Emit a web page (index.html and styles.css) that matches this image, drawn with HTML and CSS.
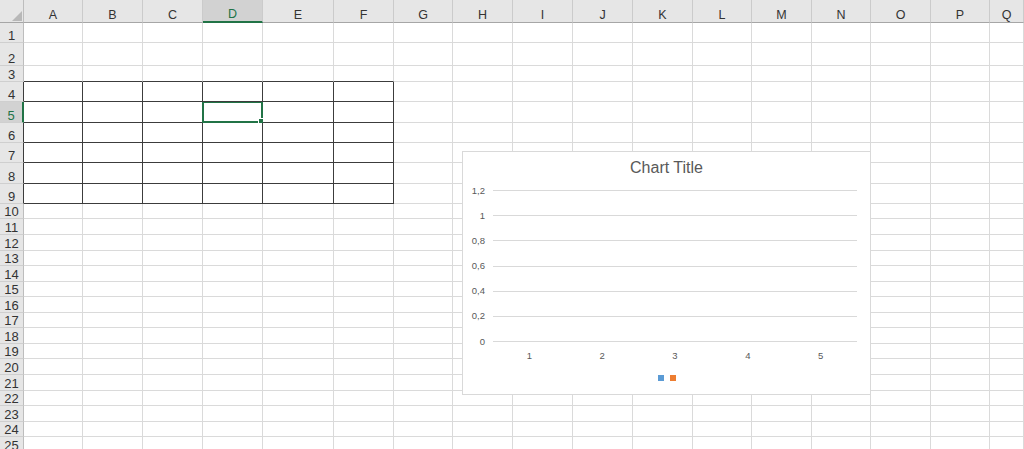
FILE: index.html
```html
<!DOCTYPE html>
<html>
<head>
<meta charset="utf-8">
<title>Sheet</title>
<link rel="stylesheet" href="styles.css">
</head>
<body>
<div class="sheet">
  <div class="row hdr"><span class="corner"><svg width="10" height="10" viewBox="0 0 10 10"><polygon points="10,0 10,10 0,10" fill="#b8b8b8"/></svg></span><span>A</span><span>B</span><span>C</span><span class="on">D</span><span>E</span><span>F</span><span>G</span><span>H</span><span>I</span><span>J</span><span>K</span><span>L</span><span>M</span><span>N</span><span>O</span><span>P</span><span>Q</span></div>
  <div class="row h20"><span class="rh">1</span><span></span><span></span><span></span><span></span><span></span><span></span><span></span><span></span><span></span><span></span><span></span><span></span><span></span><span></span><span></span><span></span><span></span></div>
  <div class="row h23"><span class="rh">2</span><span></span><span></span><span></span><span></span><span></span><span></span><span></span><span></span><span></span><span></span><span></span><span></span><span></span><span></span><span></span><span></span><span></span></div>
  <div class="row h16 tt"><span class="rh">3</span><span></span><span></span><span></span><span></span><span></span><span></span><span></span><span></span><span></span><span></span><span></span><span></span><span></span><span></span><span></span><span></span><span></span></div>
  <div class="row h20 tb"><span class="rh">4</span><span></span><span></span><span></span><span></span><span></span><span></span><span></span><span></span><span></span><span></span><span></span><span></span><span></span><span></span><span></span><span></span><span></span></div>
  <div class="row h21 tb"><span class="rh on">5</span><span></span><span></span><span></span><span class="cur"><i class="selbox"></i></span><span></span><span></span><span></span><span></span><span></span><span></span><span></span><span></span><span></span><span></span><span></span><span></span><span></span></div>
  <div class="row h20 tb"><span class="rh">6</span><span></span><span></span><span></span><span></span><span></span><span></span><span></span><span></span><span></span><span></span><span></span><span></span><span></span><span></span><span></span><span></span><span></span></div>
  <div class="row h20 tb"><span class="rh">7</span><span></span><span></span><span></span><span></span><span></span><span></span><span></span><span></span><span></span><span></span><span></span><span></span><span></span><span></span><span></span><span></span><span></span></div>
  <div class="row h21 tb"><span class="rh">8</span><span></span><span></span><span></span><span></span><span></span><span></span><span></span><span></span><span></span><span></span><span></span><span></span><span></span><span></span><span></span><span></span><span></span></div>
  <div class="row h20 tb"><span class="rh">9</span><span></span><span></span><span></span><span></span><span></span><span></span><span></span><span></span><span></span><span></span><span></span><span></span><span></span><span></span><span></span><span></span><span></span></div>
  <div class="row h15"><span class="rh">10</span><span></span><span></span><span></span><span></span><span></span><span></span><span></span><span></span><span></span><span></span><span></span><span></span><span></span><span></span><span></span><span></span><span></span></div>
  <div class="row h16"><span class="rh">11</span><span></span><span></span><span></span><span></span><span></span><span></span><span></span><span></span><span></span><span></span><span></span><span></span><span></span><span></span><span></span><span></span><span></span></div>
  <div class="row h16"><span class="rh">12</span><span></span><span></span><span></span><span></span><span></span><span></span><span></span><span></span><span></span><span></span><span></span><span></span><span></span><span></span><span></span><span></span><span></span></div>
  <div class="row h15"><span class="rh">13</span><span></span><span></span><span></span><span></span><span></span><span></span><span></span><span></span><span></span><span></span><span></span><span></span><span></span><span></span><span></span><span></span><span></span></div>
  <div class="row h16"><span class="rh">14</span><span></span><span></span><span></span><span></span><span></span><span></span><span></span><span></span><span></span><span></span><span></span><span></span><span></span><span></span><span></span><span></span><span></span></div>
  <div class="row h15"><span class="rh">15</span><span></span><span></span><span></span><span></span><span></span><span></span><span></span><span></span><span></span><span></span><span></span><span></span><span></span><span></span><span></span><span></span><span></span></div>
  <div class="row h16"><span class="rh">16</span><span></span><span></span><span></span><span></span><span></span><span></span><span></span><span></span><span></span><span></span><span></span><span></span><span></span><span></span><span></span><span></span><span></span></div>
  <div class="row h15"><span class="rh">17</span><span></span><span></span><span></span><span></span><span></span><span></span><span></span><span></span><span></span><span></span><span></span><span></span><span></span><span></span><span></span><span></span><span></span></div>
  <div class="row h16"><span class="rh">18</span><span></span><span></span><span></span><span></span><span></span><span></span><span></span><span></span><span></span><span></span><span></span><span></span><span></span><span></span><span></span><span></span><span></span></div>
  <div class="row h15"><span class="rh">19</span><span></span><span></span><span></span><span></span><span></span><span></span><span></span><span></span><span></span><span></span><span></span><span></span><span></span><span></span><span></span><span></span><span></span></div>
  <div class="row h16"><span class="rh">20</span><span></span><span></span><span></span><span></span><span></span><span></span><span></span><span></span><span></span><span></span><span></span><span></span><span></span><span></span><span></span><span></span><span></span></div>
  <div class="row h16"><span class="rh">21</span><span></span><span></span><span></span><span></span><span></span><span></span><span></span><span></span><span></span><span></span><span></span><span></span><span></span><span></span><span></span><span></span><span></span></div>
  <div class="row h15"><span class="rh">22</span><span></span><span></span><span></span><span></span><span></span><span></span><span></span><span></span><span></span><span></span><span></span><span></span><span></span><span></span><span></span><span></span><span></span></div>
  <div class="row h16"><span class="rh">23</span><span></span><span></span><span></span><span></span><span></span><span></span><span></span><span></span><span></span><span></span><span></span><span></span><span></span><span></span><span></span><span></span><span></span></div>
  <div class="row h15"><span class="rh">24</span><span></span><span></span><span></span><span></span><span></span><span></span><span></span><span></span><span></span><span></span><span></span><span></span><span></span><span></span><span></span><span></span><span></span></div>
  <div class="row h16"><span class="rh">25</span><span></span><span></span><span></span><span></span><span></span><span></span><span></span><span></span><span></span><span></span><span></span><span></span><span></span><span></span><span></span><span></span><span></span></div>

  <div class="chart">
    <div class="ctitle">Chart Title</div>
    <div class="plot">
      <div class="yrow"><span class="yl">1,2</span><span class="gl"></span></div>
      <div class="yrow"><span class="yl">1</span><span class="gl"></span></div>
      <div class="yrow"><span class="yl">0,8</span><span class="gl"></span></div>
      <div class="yrow"><span class="yl">0,6</span><span class="gl"></span></div>
      <div class="yrow"><span class="yl">0,4</span><span class="gl"></span></div>
      <div class="yrow"><span class="yl">0,2</span><span class="gl"></span></div>
      <div class="yrow"><span class="yl">0</span><span class="gl"></span></div>
    </div>
    <div class="xrow"><span>1</span><span>2</span><span>3</span><span>4</span><span>5</span></div>
    <div class="legend"><i class="s1"></i><i class="s2"></i></div>
  </div>
</div>
</body>
</html>
```
FILE: styles.css
```css
html, body {
  margin: 0;
  padding: 0;
  background: #ffffff;
  overflow: hidden;
}

.sheet {
  position: relative;
  width: 1024px;
  font-family: "Liberation Sans", Arial, sans-serif;
  color: #333333;
}

.row {
  display: grid;
  grid-template-columns: 24px 59px 60px 60px 60px 71px 60px 59px 60px 60px 60px 60px 59px 60px 59px 60px 59px 1fr;
  overflow: hidden;
}

.row > span {
  box-sizing: border-box;
  border-right: 1px solid #dadada;
  border-bottom: 1px solid #dadada;
  position: relative;
}

.h15 { height: 15px; }
.h16 { height: 16px; }
.h20 { height: 20px; }
.h21 { height: 21px; }
.h23 { height: 23px; }

/* column header */
.hdr {
  height: 23px;
  background: #e6e6e6;
}
.hdr > span {
  display: flex;
  align-items: flex-end;
  justify-content: center;
  font-size: 12.5px;
  line-height: 14px;
  border-right: 1px solid #cbcbcb;
  border-bottom: 1px solid #a6a6a6;
}
.hdr > span.on {
  background: #d2d2d2;
  color: #217346;
  border-bottom: 2px solid #217346;
  line-height: 13px;
}
.hdr > .corner {
  justify-content: flex-end;
  padding: 0 1px 1px 0;
  border-right: 1px solid #bdbdbd;
}
.corner svg {
  display: block;
}

/* row header */
.row > .rh {
  display: flex;
  align-items: flex-end;
  justify-content: center;
  background: #e6e6e6;
  font-size: 13px;
  line-height: 13px;
  padding-bottom: 0;
  border-right: 1px solid #bdbdbd;
  border-bottom: 1px solid #cfcfcf;
}
.row > .rh.on {
  background: #d2d2d2;
  color: #217346;
  border-right: 2px solid #217346;
}

/* bordered table A4:F9 */
.tt > span:nth-child(n+2):nth-child(-n+7) {
  border-bottom-color: #3c3c3c;
}
.tb > span:nth-child(n+2):nth-child(-n+7) {
  border-right-color: #3c3c3c;
  border-bottom-color: #3c3c3c;
}
.tb > .rh {
  border-right-color: #3c3c3c;
}

/* active cell */
.row > .cur {
  overflow: visible;
}
.selbox {
  position: absolute;
  left: -1px;
  top: -1px;
  right: -1px;
  bottom: -1px;
  border: 2px solid #217346;
  box-sizing: border-box;
}
.selbox::after {
  content: "";
  position: absolute;
  right: -3px;
  bottom: -3px;
  width: 4px;
  height: 4px;
  background: #217346;
  border: 1px solid #ffffff;
}

/* chart */
.chart {
  position: absolute;
  left: 462px;
  top: 151px;
  width: 409px;
  height: 244px;
  box-sizing: border-box;
  border: 1px solid #d9d9d9;
  background: #ffffff;
  color: #595959;
}
.ctitle {
  box-sizing: border-box;
  height: 26px;
  padding-top: 7px;
  font-size: 16px;
  line-height: 18px;
  text-align: center;
}
.plot {
  padding-right: 13px;
}
.yrow {
  display: flex;
  align-items: center;
  height: 25.17px;
}
.yl {
  width: 22px;
  text-align: right;
  font-size: 9.5px;
  line-height: 10px;
}
.gl {
  flex: 1;
  height: 1px;
  margin-left: 8px;
  background: #d9d9d9;
}
.xrow {
  display: flex;
  margin: -3px 13px 0 30px;
  font-size: 9.5px;
  line-height: 10px;
}
.xrow span {
  flex: 1;
  text-align: center;
}
.legend {
  display: flex;
  justify-content: center;
  gap: 6px;
  margin-top: 14px;
}
.legend i {
  display: block;
  width: 6px;
  height: 6px;
}
.legend .s1 { background: #5b9bd5; }
.legend .s2 { background: #ed7d31; }
```
